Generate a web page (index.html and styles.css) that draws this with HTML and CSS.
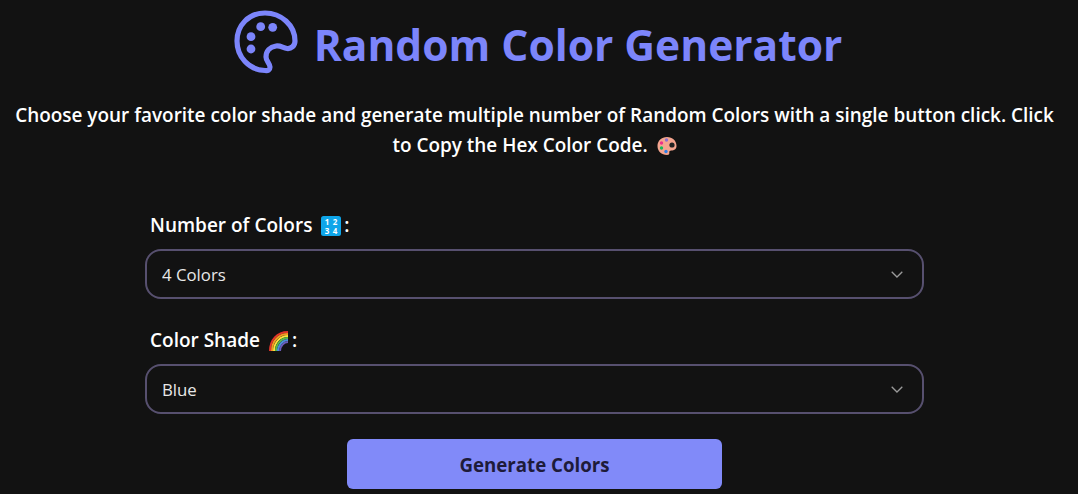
FILE: index.html
```html
<!DOCTYPE html>
<html lang="en">
<head>
    <meta charset="UTF-8">
    <title>Random Color Generator</title>
    <link rel="stylesheet" href="styles.css">
</head>
<body>
    <div class="page">
        <h1 class="title">
            <svg class="title-icon" viewBox="0 0 64 64" fill="none" stroke="currentColor" stroke-width="5.2" stroke-linejoin="round">
                <path d="M31 3C47 3 61 15 61 31 61 36 57 39 53 38.500 49 38 46 35 42 36 36 37 32 41 32 47 32 51 36 54 36 57 36 60 34 61 31 60.500 15 60 3 47 3 31 3 15 15 3 31 3z"/>
                <g fill="currentColor" stroke="none">
                    <circle cx="26.700" cy="16.700" r="4.400"/>
                    <circle cx="38.700" cy="17.300" r="4.400"/>
                    <circle cx="17" cy="26.700" r="4.400"/>
                    <circle cx="17" cy="39" r="4.400"/>
                </g>
            </svg>
            <span>Random Color Generator</span>
        </h1>
        <p class="intro">Choose your favorite color shade and generate multiple number of Random Colors with a single button click. Click to Copy the Hex Color Code.
            <svg class="emoji palette" viewBox="0 0 20 20">
                <path fill="#f4a58f" d="M10 1C4.500 1 .5 4.800.5 10s4 9 9.500 9c1.800 0 2.500-1 2.300-2.300-.2-1.400.5-2.200 2-2.200 3 0 5.200-1.500 5.200-4.500C19.500 4.800 15.500 1 10 1z"/>
                <circle cx="15" cy="9" r="2.600" fill="#222"/>
                <circle cx="9.500" cy="4" r="1.700" fill="#8a6fd1"/>
                <circle cx="4.500" cy="7" r="1.700" fill="#ec2f8c"/>
                <circle cx="4.500" cy="12" r="1.700" fill="#16b85a"/>
                <circle cx="9" cy="15.500" r="1.700" fill="#2f7fe8"/>
            </svg>
        </p>
        <form class="form">
            <label class="label">Number of Colors
                <svg class="emoji" viewBox="0 0 20 20">
                    <rect x="0" y="0" width="20" height="20" rx="2.500" fill="#0ea5e9"/>
                    <text x="6" y="8.500" class="keycap">1</text>
                    <text x="14" y="8.500" class="keycap">2</text>
                    <text x="6" y="17.500" class="keycap">3</text>
                    <text x="14" y="17.500" class="keycap">4</text>
                </svg>:
            </label>
            <div class="select-wrap">
                <select class="select">
                    <option>4 Colors</option>
                    <option>8 Colors</option>
                    <option>12 Colors</option>
                </select>
                <svg class="chevron" viewBox="0 0 12 7" fill="none" stroke="currentColor" stroke-width="1.300"><path d="M.7.7 6 6 11.300.7"/></svg>
            </div>
            <label class="label">Color Shade
                <svg class="emoji" viewBox="0 0 20 20" fill="none" stroke-width="2">
                    <path stroke="#e5352b" d="M1 20C1 9 8 1 19 1"/>
                    <path stroke="#f59a23" d="M3 20C3 10 9.500 3 19 3"/>
                    <path stroke="#fbe23c" d="M5 20C5 11.500 11 5 19 5"/>
                    <path stroke="#59b84a" d="M7 20C7 13 12.500 7 19 7"/>
                    <path stroke="#4a90d9" d="M9 20C9 14 14 9 19 9"/>
                    <path stroke="#6a5bb8" d="M11 20C11 15 15 11 19 11"/>
                </svg>:
            </label>
            <div class="select-wrap">
                <select class="select">
                    <option>Blue</option>
                    <option>Red</option>
                    <option>Green</option>
                </select>
                <svg class="chevron" viewBox="0 0 12 7" fill="none" stroke="currentColor" stroke-width="1.300"><path d="M.7.7 6 6 11.300.7"/></svg>
            </div>
            <button class="btn" type="button">Generate Colors</button>
        </form>
    </div>
</body>
</html>
```

FILE: styles.css
```css
html, body {
    margin: 0;
    height: 494px;
    overflow: hidden;
    background: #121212;
}
body {
    font-family: "Open Sans", "Noto Sans", sans-serif;
    color: #fff;
}
.page {
    width: 1069px;
    display: flex;
    flex-direction: column;
    align-items: center;
}
.title {
    margin: 7px 0 0 7px;
    height: 75px;
    display: flex;
    align-items: center;
    gap: 16px;
    font-size: 42.5px;
    font-weight: 700;
    color: #7c85fb;
    white-space: nowrap;
}
.title-icon {
    width: 64px;
    height: 64px;
    margin-bottom: 5px;
}
.intro {
    margin: 18px 0 0;
    width: 1045px;
    text-align: center;
    font-size: 18.95px;
    font-weight: 600;
    line-height: 30px;
}
.emoji {
    display: inline-block;
    width: 20px;
    height: 20px;
    vertical-align: -4px;
}
.palette {
    margin-left: 4px;
}
.keycap {
    font-size: 8px;
    font-weight: 700;
    fill: #fff;
    text-anchor: middle;
}
.form {
    width: 779px;
    margin-top: 52px;
    display: flex;
    flex-direction: column;
}
.label {
    margin: 0 0 11px 5px;
    height: 26px;
    font-size: 19px;
    font-weight: 600;
    line-height: 26px;
}
.label .emoji {
    margin: 0 3px 0 4px;
}
.select-wrap {
    position: relative;
    margin-bottom: 28px;
}
.select {
    display: block;
    width: 100%;
    height: 50px;
    padding: 0 16px 0 15px;
    border: 2px solid #57506f;
    border-radius: 16px;
    background: #121212;
    color: #e8e8e8;
    font-family: inherit;
    font-size: 16.8px;
    appearance: none;
    box-sizing: border-box;
}
.chevron {
    position: absolute;
    top: 22px;
    right: 21px;
    width: 12px;
    height: 7px;
    color: #9a9a9a;
}
.btn {
    align-self: center;
    width: 375px;
    height: 50px;
    margin-top: -3px;
    border: 0;
    border-radius: 6px;
    background: #818af9;
    color: #1e1b3a;
    font-family: inherit;
    font-size: 18.7px;
    font-weight: 700;
}
```
